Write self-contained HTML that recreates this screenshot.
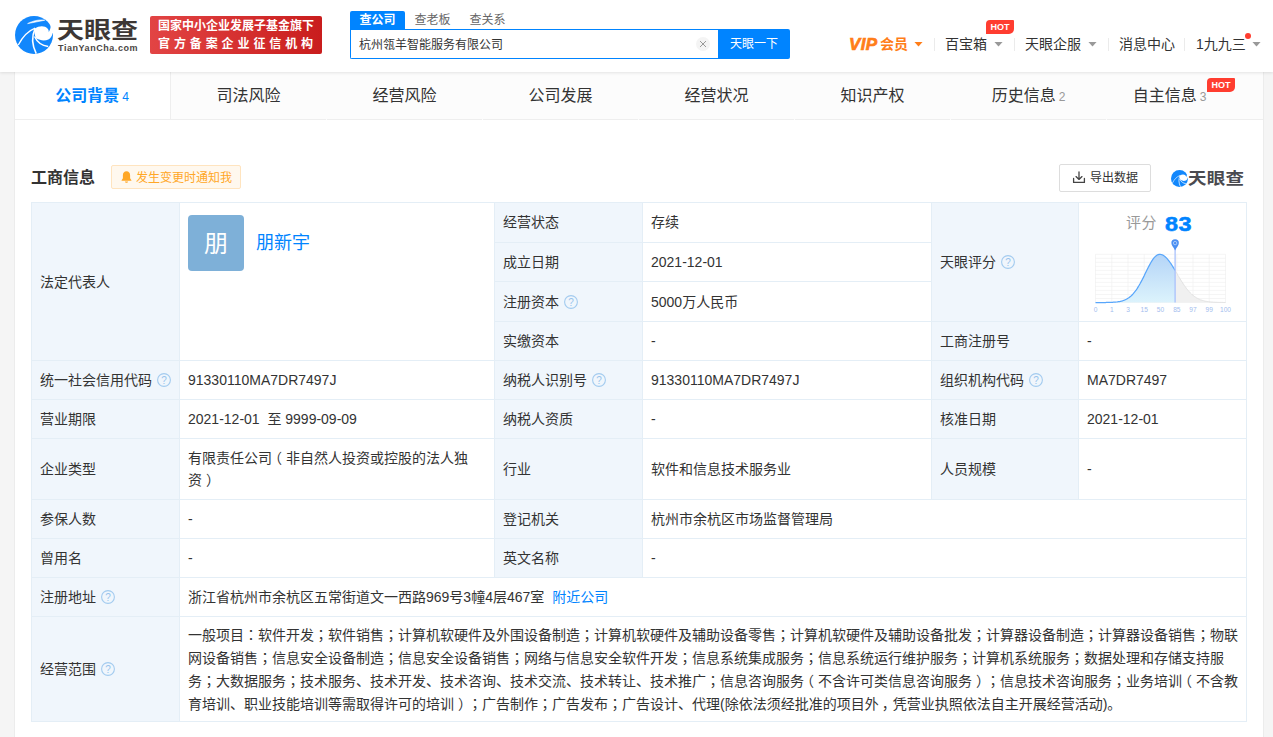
<!DOCTYPE html>
<html lang="zh-CN">
<head>
<meta charset="utf-8">
<title>天眼查</title>
<style>
*{box-sizing:border-box;margin:0;padding:0}
html,body{width:1273px;height:737px;overflow:hidden}
body{text-spacing-trim:space-all;background:#f5f5f5;font-family:"Liberation Sans","Noto Sans CJK SC",sans-serif;font-size:14px;color:#333;position:relative}
a{text-decoration:none;color:#0084ff}
.abs{position:absolute}
/* header */
#header{position:absolute;left:0;top:0;width:1273px;height:72px;background:#fff;box-shadow:0 1px 3px rgba(0,0,0,.1);z-index:5}
#logo-text{position:absolute;left:57px;top:17.5px;font-size:27px;line-height:30px;height:30px;font-weight:700;color:#3d3735;white-space:nowrap;transform:scaleY(.84);transform-origin:0 0}
#logo-sub{position:absolute;left:58px;top:42px;font-size:9px;line-height:12px;font-weight:700;color:#4a4543;letter-spacing:.55px;white-space:nowrap}
#badge{position:absolute;left:150px;top:16px;width:172px;height:38px;border-radius:2px;background:linear-gradient(90deg,#e24444,#c91d1d);color:#fff;font-weight:700;font-size:12px;line-height:17px;padding:2px 0 0 8px;white-space:nowrap}
#badge .l2{letter-spacing:3.9px;position:relative;top:.5px}
#stabs{position:absolute;left:350px;top:11px;height:18px;font-size:12px;line-height:18px;white-space:nowrap;color:#666}
#stabs span{display:inline-block;height:18px;vertical-align:top}
#stabs .on{background:#0084ff;color:#fff;width:55px;text-align:center;border-radius:2px 2px 0 0;font-weight:700}
#sinput{position:absolute;left:350px;top:29px;width:369px;height:30px;border:1px solid #0084ff;border-right:none;border-radius:0 0 0 2px;background:#fff;font-size:12px;line-height:30px;padding-left:8px;color:#333}
#sclear{position:absolute;left:695px;top:36px;width:15px;height:15px;border-radius:50%;background:#f5f5f5;color:#b0b0b0;font-size:12px;line-height:15px;text-align:center}
#sbtn{position:absolute;left:718px;top:29px;width:72px;height:30px;background:#0084ff;color:#fff;font-size:12px;line-height:31px;text-align:center;border-radius:0 2px 2px 0}
.nav{position:absolute;top:34px;font-size:14px;line-height:20px;white-space:nowrap;color:#333}
.caret{position:absolute;width:9px;height:5px;background:#999;clip-path:polygon(0 0,100% 0,50% 100%)}
.sep{position:absolute;top:38px;width:1px;height:13px;background:#ebebeb}
.hot{position:absolute;background:#ff3d30;color:#fff;font-size:9px;font-weight:700;line-height:14px;height:14px;width:28px;text-align:center;border-radius:4px 1px 5px 0}
/* container */
#wrap{position:absolute;left:15px;top:72px;width:1248px;height:665px;background:#fff;box-shadow:0 0 0 1px #ececec}
#tabs{position:absolute;left:0;top:0;width:1248px;height:48px;border-bottom:1px solid #eee;background:#fcfcfc}
.tab{position:absolute;top:0;width:156px;height:47px;line-height:48px;text-align:center;padding-right:1px;font-size:16px;color:#333;white-space:nowrap}
.tab small{font-size:12px;color:#999;margin-left:3px}
.tab.on{background:#fff;color:#0084ff;font-weight:700;border-right:1px solid #eee}
.tab.on small{color:#0084ff;font-weight:400}
#title{position:absolute;left:16px;top:94px;font-size:16px;font-weight:700;line-height:24px;color:#333}
#notify{position:absolute;left:96px;top:93px;width:130px;height:24px;border:1px solid #ffe4bf;background:#fff8ee;border-radius:2px;color:#ffa726;font-size:12px;line-height:24px;padding-left:24px;white-space:nowrap}
#export{position:absolute;left:1044px;top:92px;width:92px;height:28px;border:1px solid #ddd;border-radius:2px;background:#fff;font-size:12px;line-height:27px;color:#333;padding-left:30px;white-space:nowrap}
#wm{position:absolute;left:1173px;top:96.5px;font-size:18.5px;letter-spacing:.2px;font-weight:700;line-height:24px;height:24px;color:#4a4a4f;white-space:nowrap;transform:scaleY(.86);transform-origin:0 0}
/* table */
#tb{position:absolute;left:16px;top:130px;width:1215px;border-collapse:collapse;table-layout:fixed;font-size:14px;line-height:22px;color:#333}
#tb td{border:1px solid #e4eef6;padding:0 8px;vertical-align:middle;word-break:break-all}
#tb td.k{background:#f0f6fc}
#tb td.u{padding-bottom:2px}
.p{font-family:"Noto Sans CJK JP","Noto Sans CJK SC",sans-serif}
.pc{position:relative;left:3px}.pl{position:relative;left:-4px}.pr{position:relative;left:4px}
.q{display:inline-block;width:14px;height:14px;vertical-align:-2px;margin-left:5px}
#av{position:absolute;left:188px;top:215px;width:56px;height:56px;border-radius:4px;background:#7eb0d8;color:#fff;font-size:24px;line-height:57px;text-align:center}
#rn{position:absolute;left:256px;top:230px;font-size:18px;line-height:26px;color:#0084ff;white-space:nowrap}
#sc1{position:absolute;left:1126px;top:211.5px;font-size:15px;letter-spacing:.4px;line-height:22px;color:#999;white-space:nowrap}
#sc2{position:absolute;left:1165px;top:210.5px;font-size:20px;line-height:26px;font-weight:700;color:#0084ff;white-space:nowrap;-webkit-text-stroke:.5px #0084ff;letter-spacing:.4px;transform:scaleX(1.17);transform-origin:0 0}
</style>
</head>
<body>
<div id="header">
  <svg class="abs" style="left:15px;top:16px" width="38" height="38" viewBox="0 0 38 38">
    <circle cx="19" cy="19" r="19" fill="#1287fc"/>
    <path d="M20 12.5C24 9.6 30 9.6 32.5 12.5C33.8 14 33.9 15.4 33.6 16.2C35 14 35.8 12 35.6 9.3L39 9L39 17L37.7 17C37 20 35.5 22.5 33.4 23.5C30 25 25 24.6 21.5 22.6C19.5 20 19 16 20 12.5Z" fill="#fff"/>
    <path d="M3.3 29C8 20 13 15 20.2 12.2" stroke="#fff" stroke-width="1.3" fill="none"/>
    <path d="M21.2 37.6C17 29 16.6 20 20.2 12.3" stroke="#fff" stroke-width="1.6" fill="none"/>
    <path d="M12.6 7.6C17.5 4.9 24 3.3 29.8 4.2C25 5.2 19 6.4 12.6 7.6Z" fill="#fff" stroke="#fff" stroke-width=".6"/>
    <path d="M19.6 20.5C22 26 27 29.6 33.2 30.5" stroke="#fff" stroke-width="1.5" fill="none"/>
  </svg>
  <div id="logo-text">天眼查</div>
  <div id="logo-sub">TianYanCha.com</div>
  <div id="badge"><div>国家中小企业发展子基金旗下</div><div class="l2">官方备案企业征信机构</div></div>
  <div id="stabs"><span class="on">查公司</span><span style="margin-left:9.5px">查老板</span><span style="margin-left:19px">查关系</span></div>
  <div id="sinput">杭州瓴羊智能服务有限公司</div>
  <svg class="abs" style="left:696px;top:37px" width="14" height="14" viewBox="0 0 14 14"><circle cx="7" cy="7" r="7" fill="#f4f4f4"/><path d="M4 4L10 10M10 4L4 10" stroke="#999" stroke-width="1" fill="none"/></svg>
  <div id="sbtn">天眼一下</div>

  <div class="nav" style="left:849px;top:35px;color:#ff7d18;font-weight:700;font-size:17px;font-style:italic;-webkit-text-stroke:.7px #ff7d18;letter-spacing:.4px">VIP</div>
  <div class="nav" style="left:880px;color:#ff7d18;font-weight:700;font-size:14px">会员</div>
  <div class="caret" style="left:914px;top:41.5px;background:#ff7d18"></div>
  <div class="sep" style="left:934px"></div>
  <div class="nav" style="left:945px">百宝箱</div>
  <div class="caret" style="left:994px;top:41.5px"></div>
  <div class="hot" style="left:986px;top:20px">HOT</div>
  <div class="sep" style="left:1014px"></div>
  <div class="nav" style="left:1025px">天眼企服</div>
  <div class="caret" style="left:1088px;top:41.5px"></div>
  <div class="sep" style="left:1108px"></div>
  <div class="nav" style="left:1119px">消息中心</div>
  <div class="sep" style="left:1184px"></div>
  <div class="nav" style="left:1196px">1九九三</div>
  <div class="abs" style="left:1245px;top:33px;width:6px;height:6px;border-radius:50%;background:#ff3d30"></div>
  <div class="caret" style="left:1252px;top:41.5px"></div>
</div>

<div id="wrap">
  <div id="tabs">
    <div class="tab on" style="left:0">公司背景<small>4</small></div>
    <div class="tab" style="left:156px">司法风险</div>
    <div class="tab" style="left:312px">经营风险</div>
    <div class="tab" style="left:468px">公司发展</div>
    <div class="tab" style="left:624px">经营状况</div>
    <div class="tab" style="left:780px">知识产权</div>
    <div class="tab" style="left:936px">历史信息<small>2</small></div>
    <div class="tab" style="left:1077px">自主信息<small>3</small></div>
    <div class="hot" style="left:1192px;top:6px">HOT</div>
    <i class="abs" style="left:311px;top:47px;width:1px;height:1px;background:#fcfcfc"></i><i class="abs" style="left:467px;top:47px;width:1px;height:1px;background:#fcfcfc"></i><i class="abs" style="left:623px;top:47px;width:1px;height:1px;background:#fcfcfc"></i><i class="abs" style="left:779px;top:47px;width:1px;height:1px;background:#fcfcfc"></i><i class="abs" style="left:935px;top:47px;width:1px;height:1px;background:#fcfcfc"></i><i class="abs" style="left:1091px;top:47px;width:1px;height:1px;background:#fcfcfc"></i>
  </div>
  <div id="title">工商信息</div>
  <div id="notify"><svg class="abs" style="left:8.5px;top:5px" width="11" height="12" viewBox="0 0 11 12"><path d="M5.5 0.3C7.8 0.3 9.1 2 9.1 4.2V7.2L10.4 9.2V9.8H0.6V9.2L1.9 7.2V4.2C1.9 2 3.2 0.3 5.5 0.3Z" fill="#ffa726"/><path d="M4 10.4H7C7 11.3 6.3 11.8 5.5 11.8C4.7 11.8 4 11.3 4 10.4Z" fill="#ffa726"/></svg>发生变更时通知我</div>
  <div id="export"><svg class="abs" style="left:12px;top:6px" width="14" height="13" viewBox="0 0 14 13"><path d="M1.6 7.5V11.4H12.4V7.5M7 1V8.2M4 5.6L7 8.4L10 5.6" fill="none" stroke="#444" stroke-width="1.3" stroke-linecap="round" stroke-linejoin="round"/></svg>导出数据</div>
  <svg class="abs" style="left:1155.5px;top:97.5px" width="17" height="17" viewBox="0 0 38 38">
    <circle cx="19" cy="19" r="19" fill="#1287fc"/>
    <path d="M20 12.5C24 9.6 30 9.6 32.5 12.5C33.8 14 33.9 15.4 33.6 16.2C35 14 35.8 12 35.6 9.3L39 9L39 17L37.7 17C37 20 35.5 22.5 33.4 23.5C30 25 25 24.6 21.5 22.6C19.5 20 19 16 20 12.5Z" fill="#fff"/>
    <path d="M3.3 29C8 20 13 15 20.2 12.2" stroke="#fff" stroke-width="1.4" fill="none"/>
    <path d="M21.2 37.6C17 29 16.6 20 20.2 12.3" stroke="#fff" stroke-width="1.6" fill="none"/>
    <path d="M19.6 20.5C22 26 27 29.6 33.2 30.5" stroke="#fff" stroke-width="1.6" fill="none"/>
  </svg>
  <div id="wm">天眼查</div>

  <table id="tb">
    <colgroup><col style="width:148px"><col style="width:315px"><col style="width:148px"><col style="width:289px"><col style="width:147px"><col style="width:168px"></colgroup>
    <tr style="height:40px"><td class="k" rowspan="4">法定代表人</td><td rowspan="4"></td><td class="k u">经营状态</td><td class="u">存续</td><td class="k" rowspan="3">天眼评分<svg class="q" viewBox="0 0 14 14"><circle cx="7" cy="7" r="6.4" fill="none" stroke="#a3cbef" stroke-width="1.1"/><text x="7" y="10.6" font-size="10" text-anchor="middle" fill="#98c4ec" font-family="&quot;Liberation Sans&quot;,sans-serif">?</text></svg></td><td rowspan="3"></td></tr>
    <tr style="height:39px"><td class="k">成立日期</td><td>2021-12-01</td></tr>
    <tr style="height:40px"><td class="k">注册资本<svg class="q" viewBox="0 0 14 14"><circle cx="7" cy="7" r="6.4" fill="none" stroke="#a3cbef" stroke-width="1.1"/><text x="7" y="10.6" font-size="10" text-anchor="middle" fill="#98c4ec" font-family="&quot;Liberation Sans&quot;,sans-serif">?</text></svg></td><td>5000万人民币</td></tr>
    <tr style="height:39px"><td class="k">实缴资本</td><td>-</td><td class="k">工商注册号</td><td>-</td></tr>
    <tr style="height:39px"><td class="k">统一社会信用代码<svg class="q" viewBox="0 0 14 14"><circle cx="7" cy="7" r="6.4" fill="none" stroke="#a3cbef" stroke-width="1.1"/><text x="7" y="10.6" font-size="10" text-anchor="middle" fill="#98c4ec" font-family="&quot;Liberation Sans&quot;,sans-serif">?</text></svg></td><td>91330110MA7DR7497J</td><td class="k">纳税人识别号<svg class="q" viewBox="0 0 14 14"><circle cx="7" cy="7" r="6.4" fill="none" stroke="#a3cbef" stroke-width="1.1"/><text x="7" y="10.6" font-size="10" text-anchor="middle" fill="#98c4ec" font-family="&quot;Liberation Sans&quot;,sans-serif">?</text></svg></td><td>91330110MA7DR7497J</td><td class="k">组织机构代码<svg class="q" viewBox="0 0 14 14"><circle cx="7" cy="7" r="6.4" fill="none" stroke="#a3cbef" stroke-width="1.1"/><text x="7" y="10.6" font-size="10" text-anchor="middle" fill="#98c4ec" font-family="&quot;Liberation Sans&quot;,sans-serif">?</text></svg></td><td>MA7DR7497</td></tr>
    <tr style="height:39px"><td class="k">营业期限</td><td>2021-12-01&nbsp; 至 9999-09-09</td><td class="k">纳税人资质</td><td>-</td><td class="k">核准日期</td><td>2021-12-01</td></tr>
    <tr style="height:61px"><td class="k">企业类型</td><td>有限责任公司<span class="pl">（</span>非自然人投资或控股的法人独资<span class="pr">）</span></td><td class="k">行业</td><td>软件和信息技术服务业</td><td class="k">人员规模</td><td>-</td></tr>
    <tr style="height:39px"><td class="k">参保人数</td><td>-</td><td class="k">登记机关</td><td colspan="3">杭州市余杭区市场监督管理局</td></tr>
    <tr style="height:39px"><td class="k">曾用名</td><td>-</td><td class="k">英文名称</td><td colspan="3">-</td></tr>
    <tr style="height:39px"><td class="k">注册地址<svg class="q" viewBox="0 0 14 14"><circle cx="7" cy="7" r="6.4" fill="none" stroke="#a3cbef" stroke-width="1.1"/><text x="7" y="10.6" font-size="10" text-anchor="middle" fill="#98c4ec" font-family="&quot;Liberation Sans&quot;,sans-serif">?</text></svg></td><td colspan="5">浙江省杭州市余杭区五常街道文一西路969号3幢4层467室<a style="margin-left:8px">附近公司</a></td></tr>
    <tr style="height:105px"><td class="k">经营范围<svg class="q" viewBox="0 0 14 14"><circle cx="7" cy="7" r="6.4" fill="none" stroke="#a3cbef" stroke-width="1.1"/><text x="7" y="10.6" font-size="10" text-anchor="middle" fill="#98c4ec" font-family="&quot;Liberation Sans&quot;,sans-serif">?</text></svg></td><td colspan="5">一般项目<span class="p" lang="ja">：</span>软件开发<span class="p" lang="ja">；</span>软件销售<span class="p" lang="ja">；</span>计算机软硬件及外围设备制造<span class="p" lang="ja">；</span>计算机软硬件及辅助设备零售<span class="p" lang="ja">；</span>计算机软硬件及辅助设备批发<span class="p" lang="ja">；</span>计算器设备制造<span class="p" lang="ja">；</span>计算器设备销售<span class="p" lang="ja">；</span>物联网设备销售<span class="p" lang="ja">；</span>信息安全设备制造<span class="p" lang="ja">；</span>信息安全设备销售<span class="p" lang="ja">；</span>网络与信息安全软件开发<span class="p" lang="ja">；</span>信息系统集成服务<span class="p" lang="ja">；</span>信息系统运行维护服务<span class="p" lang="ja">；</span>计算机系统服务<span class="p" lang="ja">；</span>数据处理和存储支持服务<span class="p" lang="ja">；</span>大数据服务<span class="p" lang="ja">；</span>技术服务、技术开发、技术咨询、技术交流、技术转让、技术推广<span class="p" lang="ja">；</span>信息咨询服务<span class="pl">（</span>不含许可类信息咨询服务<span class="pr">）</span><span class="p" lang="ja">；</span>信息技术咨询服务<span class="p" lang="ja">；</span>业务培训<span class="pl">（</span>不含教育培训、职业技能培训等需取得许可的培训<span class="pr">）</span><span class="p" lang="ja">；</span>广告制作<span class="p" lang="ja">；</span>广告发布<span class="p" lang="ja">；</span>广告设计、代理(除依法须经批准的项目外<span class="pc">，</span>凭营业执照依法自主开展经营活动)。</td></tr>
  </table>
</div>
<div id="av">朋</div>
<div id="rn">朋新宇</div>
<div id="sc1">评分</div>
<div id="sc2">83</div>
<svg class="abs" style="left:1088px;top:232px" width="150" height="84" viewBox="0 0 150 84">
<defs><linearGradient id="cg" x1="0" y1="0" x2="0" y2="1"><stop offset="0" stop-color="#b4d4f7"/><stop offset="1" stop-color="#dcf3fc"/></linearGradient></defs>
<path d="M7.5 22.3V70.5M23.8 22.3V70.5M40.0 22.3V70.5M56.2 22.3V70.5M72.5 22.3V70.5M88.8 22.3V70.5M105.0 22.3V70.5M121.2 22.3V70.5M137.5 22.3V70.5M7.5 22.3H137.5M7.5 26.3H137.5M7.5 30.3H137.5M7.5 34.4H137.5M7.5 38.4H137.5M7.5 42.4H137.5M7.5 46.4H137.5M7.5 50.4H137.5M7.5 54.4H137.5M7.5 58.4H137.5M7.5 62.5H137.5M7.5 66.5H137.5M7.5 70.5H137.5" stroke="#efefef" stroke-width="0.6" fill="none"/>
<path d="M87.1 38.4 L87.7 39.4 L88.4 40.5 L89.0 41.6 L89.6 42.7 L90.2 43.8 L90.9 44.8 L91.5 45.9 L92.1 46.9 L92.8 48.0 L93.4 49.0 L94.0 50.0 L94.7 51.0 L95.3 51.9 L95.9 52.9 L96.5 53.8 L97.2 54.7 L97.8 55.5 L98.4 56.4 L99.1 57.2 L99.7 58.0 L100.3 58.7 L101.0 59.4 L101.6 60.1 L102.2 60.8 L102.8 61.4 L103.5 62.0 L104.1 62.6 L104.7 63.1 L105.4 63.6 L106.0 64.1 L106.6 64.6 L107.3 65.0 L107.9 65.4 L108.5 65.8 L109.1 66.2 L109.8 66.5 L110.4 66.8 L111.0 67.1 L111.7 67.4 L112.3 67.7 L112.9 67.9 L113.6 68.1 L114.2 68.3 L114.8 68.5 L115.5 68.7 L116.1 68.9 L116.7 69.0 L117.3 69.2 L118.0 69.3 L118.6 69.4 L119.2 69.5 L119.9 69.6 L120.5 69.7 L121.1 69.8 L121.8 69.9 L122.4 69.9 L123.0 70.0 L123.6 70.0 L124.3 70.1 L124.9 70.1 L125.5 70.2 L126.2 70.2 L126.8 70.2 L127.4 70.3 L128.0 70.3 L128.7 70.3 L129.3 70.3 L129.9 70.4 L130.6 70.4 L131.2 70.4 L131.8 70.4 L132.5 70.4 L133.1 70.4 L133.7 70.4 L134.3 70.4 L135.0 70.5 L135.6 70.5 L136.2 70.5 L136.9 70.5 L137.5 70.5 L137.5 70.5 L87.1 70.5Z" fill="#f0f0f0"/>
<path d="M87.1 38.4 L87.7 39.4 L88.4 40.5 L89.0 41.6 L89.6 42.7 L90.2 43.8 L90.9 44.8 L91.5 45.9 L92.1 46.9 L92.8 48.0 L93.4 49.0 L94.0 50.0 L94.7 51.0 L95.3 51.9 L95.9 52.9 L96.5 53.8 L97.2 54.7 L97.8 55.5 L98.4 56.4 L99.1 57.2 L99.7 58.0 L100.3 58.7 L101.0 59.4 L101.6 60.1 L102.2 60.8 L102.8 61.4 L103.5 62.0 L104.1 62.6 L104.7 63.1 L105.4 63.6 L106.0 64.1 L106.6 64.6 L107.3 65.0 L107.9 65.4 L108.5 65.8 L109.1 66.2 L109.8 66.5 L110.4 66.8 L111.0 67.1 L111.7 67.4 L112.3 67.7 L112.9 67.9 L113.6 68.1 L114.2 68.3 L114.8 68.5 L115.5 68.7 L116.1 68.9 L116.7 69.0 L117.3 69.2 L118.0 69.3 L118.6 69.4 L119.2 69.5 L119.9 69.6 L120.5 69.7 L121.1 69.8 L121.8 69.9 L122.4 69.9 L123.0 70.0 L123.6 70.0 L124.3 70.1 L124.9 70.1 L125.5 70.2 L126.2 70.2 L126.8 70.2 L127.4 70.3 L128.0 70.3 L128.7 70.3 L129.3 70.3 L129.9 70.4 L130.6 70.4 L131.2 70.4 L131.8 70.4 L132.5 70.4 L133.1 70.4 L133.7 70.4 L134.3 70.4 L135.0 70.5 L135.6 70.5 L136.2 70.5 L136.9 70.5 L137.5 70.5" stroke="#dcdcdc" stroke-width="0.8" fill="none"/>
<path d="M7.5 70.5 L8.5 70.5 L9.5 70.5 L10.5 70.5 L11.5 70.5 L12.5 70.5 L13.5 70.5 L14.5 70.5 L15.5 70.5 L16.5 70.5 L17.5 70.5 L18.4 70.4 L19.4 70.4 L20.4 70.4 L21.4 70.4 L22.4 70.4 L23.4 70.3 L24.4 70.3 L25.4 70.2 L26.4 70.2 L27.4 70.1 L28.4 70.0 L29.4 69.9 L30.4 69.7 L31.4 69.6 L32.4 69.4 L33.4 69.1 L34.4 68.9 L35.4 68.5 L36.4 68.2 L37.3 67.7 L38.3 67.3 L39.3 66.7 L40.3 66.1 L41.3 65.4 L42.3 64.6 L43.3 63.7 L44.3 62.7 L45.3 61.6 L46.3 60.4 L47.3 59.2 L48.3 57.8 L49.3 56.3 L50.3 54.7 L51.3 53.0 L52.3 51.3 L53.3 49.4 L54.3 47.5 L55.3 45.6 L56.3 43.6 L57.2 41.5 L58.2 39.5 L59.2 37.5 L60.2 35.5 L61.2 33.6 L62.2 31.7 L63.2 30.0 L64.2 28.4 L65.2 26.9 L66.2 25.6 L67.2 24.6 L68.2 23.7 L69.2 23.0 L70.2 22.6 L71.2 22.3 L72.2 22.3 L73.2 22.5 L74.2 22.8 L75.2 23.3 L76.2 23.9 L77.1 24.7 L78.1 25.6 L79.1 26.7 L80.1 27.9 L81.1 29.1 L82.1 30.5 L83.1 31.9 L84.1 33.5 L85.1 35.1 L86.1 36.7 L87.1 38.4 L87.1 70.5 L7.5 70.5Z" fill="url(#cg)"/>
<path d="M7.5 70.5 L8.5 70.5 L9.5 70.5 L10.5 70.5 L11.5 70.5 L12.5 70.5 L13.5 70.5 L14.5 70.5 L15.5 70.5 L16.5 70.5 L17.5 70.5 L18.4 70.4 L19.4 70.4 L20.4 70.4 L21.4 70.4 L22.4 70.4 L23.4 70.3 L24.4 70.3 L25.4 70.2 L26.4 70.2 L27.4 70.1 L28.4 70.0 L29.4 69.9 L30.4 69.7 L31.4 69.6 L32.4 69.4 L33.4 69.1 L34.4 68.9 L35.4 68.5 L36.4 68.2 L37.3 67.7 L38.3 67.3 L39.3 66.7 L40.3 66.1 L41.3 65.4 L42.3 64.6 L43.3 63.7 L44.3 62.7 L45.3 61.6 L46.3 60.4 L47.3 59.2 L48.3 57.8 L49.3 56.3 L50.3 54.7 L51.3 53.0 L52.3 51.3 L53.3 49.4 L54.3 47.5 L55.3 45.6 L56.3 43.6 L57.2 41.5 L58.2 39.5 L59.2 37.5 L60.2 35.5 L61.2 33.6 L62.2 31.7 L63.2 30.0 L64.2 28.4 L65.2 26.9 L66.2 25.6 L67.2 24.6 L68.2 23.7 L69.2 23.0 L70.2 22.6 L71.2 22.3 L72.2 22.3 L73.2 22.5 L74.2 22.8 L75.2 23.3 L76.2 23.9 L77.1 24.7 L78.1 25.6 L79.1 26.7 L80.1 27.9 L81.1 29.1 L82.1 30.5 L83.1 31.9 L84.1 33.5 L85.1 35.1 L86.1 36.7 L87.1 38.4" stroke="#58a6fb" stroke-width="1.25" fill="none"/>
<path d="M87.1 16.0V70.5" stroke="#a9c1fb" stroke-width="1.3"/>
<path d="M87.1 18.6 C85.6 15.1 83.35 13.6 83.35 11.1 A3.75 3.75 0 1 1 90.85 11.1 C90.85 13.6 88.6 15.1 87.1 18.6Z" fill="#4b8ff2"/>
<circle cx="87.1" cy="11.1" r="1.7" fill="none" stroke="#cfe0fb" stroke-width="0.7"/>
<g font-family="&quot;Liberation Sans&quot;,sans-serif" font-size="6.6" fill="#a3bdee" text-anchor="middle">
<text x="7.5" y="79.7">0</text>
<text x="23.8" y="79.7">1</text>
<text x="40.0" y="79.7">3</text>
<text x="56.2" y="79.7">15</text>
<text x="72.5" y="79.7">50</text>
<text x="88.8" y="79.7">85</text>
<text x="105.0" y="79.7">97</text>
<text x="121.2" y="79.7">99</text>
<text x="137.5" y="79.7">100</text>
</g></svg>
</body>
</html>
